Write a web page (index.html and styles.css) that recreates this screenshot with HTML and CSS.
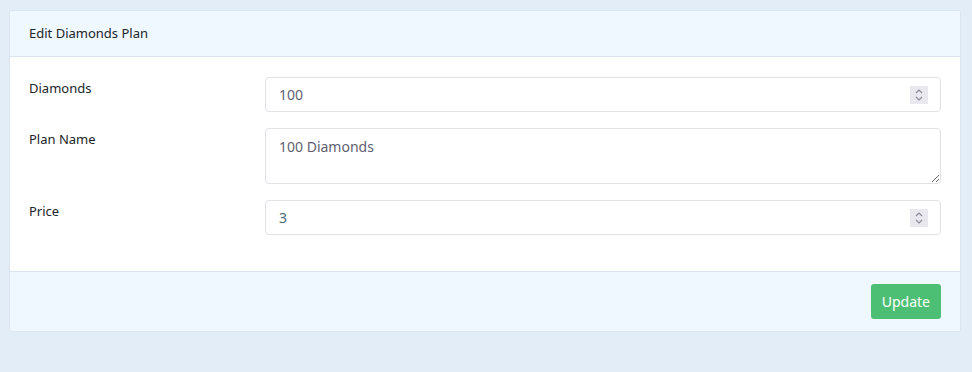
FILE: index.html
```html
<!DOCTYPE html>
<html lang="en">
<head>
  <meta charset="UTF-8"/>
  <title>Edit Diamonds Plan</title>
  <link rel="stylesheet" href="styles.css">
</head>
<body>
<div class="card">
  <div class="card-header">Edit Diamonds Plan</div>

  <form class="card-body">
    <div class="form-row">
      <label for="diamonds">Diamonds</label>
      <div class="field number-field">
        <input id="diamonds" type="text" value="100">
        <span class="spinner">
          <svg width="10" height="14" viewBox="0 0 10 14"><path d="M2 5 L5 2 L8 5 M2 9 L5 12 L8 9" fill="none" stroke="#8a8a99" stroke-width="1.2"/></svg>
        </span>
      </div>
    </div>

    <div class="form-row">
      <label for="planName">Plan Name</label>
      <textarea id="planName" class="field">100 Diamonds</textarea>
    </div>

    <div class="form-row">
      <label for="price">Price</label>
      <div class="field number-field">
        <input id="price" type="text" value="3" class="price-input">
        <span class="spinner">
          <svg width="10" height="14" viewBox="0 0 10 14"><path d="M2 5 L5 2 L8 5 M2 9 L5 12 L8 9" fill="none" stroke="#8a8a99" stroke-width="1.2"/></svg>
        </span>
      </div>
    </div>
  </form>

  <div class="card-footer">
    <button class="btn-update">Update</button>
  </div>
</div>
</body>
</html>
```

FILE: styles.css
```css
body {
  margin: 0;
  padding: 10px 11px 0 9px;
  height: 372px;
  box-sizing: border-box;
  background-color: #e3edf7;
  font-family: "Noto Sans", "Open Sans", sans-serif;
  font-size: 13px;
  color: #212529;
}
.card {
  background-color: #fff;
  border: 1px solid #dbe5ef;
  border-radius: 3px;
}
.card-header {
  background-color: #eff7ff;
  border-bottom: 1px solid #d9e4ee;
  height: 45px;
  line-height: 45px;
  padding: 0 19px;
  border-radius: 3px 3px 0 0;
}
.card-body {
  margin: 0;
  padding: 20px 19px 20px 19px;
}
.form-row {
  display: flex;
  align-items: flex-start;
  margin-bottom: 16px;
}
.form-row label {
  width: 236px;
  flex: none;
  padding-top: 2px;
}
.field {
  flex: 1;
  box-sizing: border-box;
  border: 1px solid #e2e2e6;
  border-radius: 4px;
  background-color: #fff;
}
.number-field {
  display: flex;
  align-items: center;
  height: 35px;
  padding: 0 12px 0 13px;
}
.number-field input {
  flex: 1;
  border: none;
  outline: none;
  padding: 0;
  font: inherit;
  font-size: 14px;
  color: #5f6072;
  background: none;
}
.number-field .price-input {
  color: #4a6a78;
}
.spinner {
  width: 18px;
  height: 18px;
  background-color: #e8e8ee;
  display: flex;
  align-items: center;
  justify-content: center;
}
textarea.field {
  height: 56px;
  padding: 8px 13px;
  font: inherit;
  font-size: 14px;
  color: #5f6072;
  resize: vertical;
  outline: none;
}
.card-footer {
  background-color: #eff7ff;
  border-top: 1px solid #d9e4ee;
  padding: 12px 19px;
  display: flex;
  justify-content: flex-end;
  border-radius: 0 0 3px 3px;
}
.btn-update {
  background-color: #4dbf74;
  border: none;
  border-radius: 3px;
  color: #fff;
  font-family: inherit;
  font-size: 14px;
  height: 35px;
  padding: 0 11px;
  cursor: pointer;
}
```
